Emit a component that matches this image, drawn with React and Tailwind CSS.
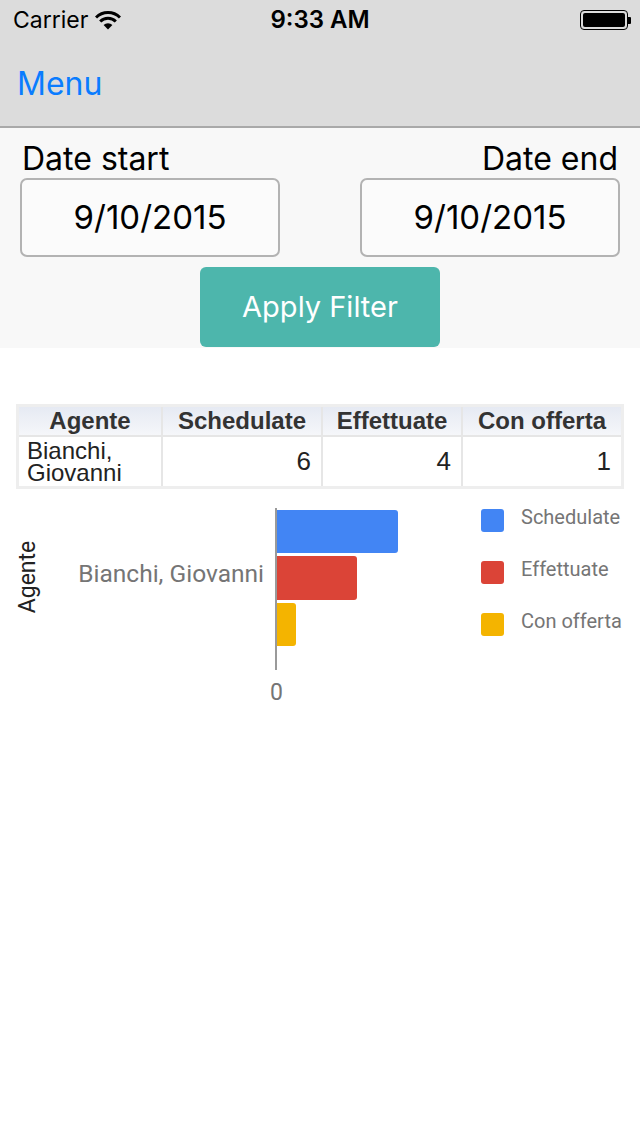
import React from "react";

const sf = { fontFamily: "Inter, 'Noto Sans', sans-serif" };
const arial = { fontFamily: "'Liberation Sans', Arial, sans-serif" };
const roboto = { fontFamily: "Roboto, 'Noto Sans', sans-serif" };

function Wifi() {
  return (
    <svg width="26" height="20" viewBox="0 0 26 20">
      <path d="M1 7.5 A17 17 0 0 1 25 7.5" fill="none" stroke="#000" strokeWidth="3" />
      <path d="M5.2 11.5 A11 11 0 0 1 20.8 11.5" fill="none" stroke="#000" strokeWidth="3" />
      <path d="M13 19.5 L8.6 15 A6.2 6.2 0 0 1 17.4 15 Z" fill="#000" />
    </svg>
  );
}

function Battery() {
  return (
    <div className="flex items-center">
      <div className="w-[48px] h-[20px] rounded-[4px] border border-black p-[2px] flex">
        <div className="flex-1 bg-black rounded-[2px]" />
      </div>
      <div className="w-[3px] h-[7px] bg-black rounded-r-[1px]" />
    </div>
  );
}

export default function App() {
  return (
    <div className="w-[640px] h-[1136px] bg-white overflow-hidden" style={sf}>
      {/* Status bar + nav */}
      <div className="bg-[#dcdcdc] border-b-2 border-[#a9a9a9]">
        <div className="h-[40px] relative flex items-center px-[13px]">
          <div className="flex items-center gap-[7px]">
            <span className="text-[23px] text-black leading-none">Carrier</span>
            <Wifi />
          </div>
          <div className="absolute left-0 right-0 text-center text-[24px] font-semibold text-black leading-none pointer-events-none">
            9:33 AM
          </div>
          <div className="ml-auto mr-[-4px]">
            <Battery />
          </div>
        </div>
        <div className="h-[86px] flex items-center px-[17px]">
          <span className="text-[32px] text-[#0a7cff] leading-none mt-[2px]">Menu</span>
        </div>
      </div>

      {/* Filter form */}
      <div className="bg-[#f8f8f8] px-[20px] pt-[13px] h-[220px]">
        <div className="flex justify-between px-[2px] text-[32px] text-black leading-[36px]">
          <span>Date start</span>
          <span>Date end</span>
        </div>
        <div className="flex justify-between mt-[1px]">
          <div className="w-[260px] h-[79px] border-2 border-[#b3b3b3] rounded-[7px] bg-white/40 flex items-center justify-center text-[33px] text-black">
            9/10/2015
          </div>
          <div className="w-[260px] h-[79px] border-2 border-[#b3b3b3] rounded-[7px] bg-white/40 flex items-center justify-center text-[33px] text-black">
            9/10/2015
          </div>
        </div>
        <div className="flex justify-center mt-[10px]">
          <div className="w-[240px] h-[80px] bg-[#4db6ac] rounded-[6px] flex items-center justify-center text-[29px] text-white">
            Apply Filter
          </div>
        </div>
      </div>

      {/* Table */}
      <div className="px-[16px] mt-[56px]" style={arial}>
        <div className="border-[3px] border-[#eeeeee] w-[608px]">
          <table className="border-collapse w-full table-fixed">
            <colgroup>
              <col className="w-[143px]" />
              <col className="w-[160px]" />
              <col className="w-[140px]" />
              <col />
            </colgroup>
            <thead>
              <tr className="bg-gradient-to-b from-[#e6eaf3] to-[#f6f7fa] h-[29px]">
                <th className="border-r-2 border-[#e6e6e6] text-[24px] font-bold text-[#333] leading-none text-center">Agente</th>
                <th className="border-r-2 border-[#e6e6e6] text-[24px] font-bold text-[#333] leading-none text-center">Schedulate</th>
                <th className="border-r-2 border-[#e6e6e6] text-[24px] font-bold text-[#333] leading-none text-center">Effettuate</th>
                <th className="text-[24px] font-bold text-[#333] leading-none text-center">Con offerta</th>
              </tr>
            </thead>
            <tbody>
              <tr className="h-[50px] bg-white border-t-2 border-[#e6e6e6]">
                <td className="border-r-2 border-[#e6e6e6] text-[24px] text-[#222] leading-[22px] px-[8px] align-middle">Bianchi,<br />Giovanni</td>
                <td className="border-r-2 border-[#e6e6e6] text-[26px] text-[#222] text-right pr-[10px]">6</td>
                <td className="border-r-2 border-[#e6e6e6] text-[26px] text-[#222] text-right pr-[10px]">4</td>
                <td className="text-[26px] text-[#222] text-right pr-[10px]">1</td>
              </tr>
            </tbody>
          </table>
        </div>
      </div>

      {/* Chart */}
      <div className="relative h-[230px] mt-[12px]" style={roboto}>
        {/* y axis title */}
        <div className="absolute left-[28px] top-[62px] -translate-x-1/2 -rotate-90 text-[23px] leading-[28px] text-[#222] whitespace-nowrap">
          Agente
        </div>
        {/* category label */}
        <div className="absolute right-[376px] top-[57px] text-[24.5px] leading-[32px] text-[#757575] whitespace-nowrap">
          Bianchi, Giovanni
        </div>
        {/* axis */}
        <div className="absolute left-[275px] top-[7px] w-[2px] h-[162px] bg-[#9a9a9a]" />
        {/* bars */}
        <div className="absolute left-[277px] top-[9px] flex flex-col gap-[3px]">
          <div className="w-[121px] h-[43px] bg-[#4285f4] rounded-r-[3px]" />
          <div className="w-[80px] h-[44px] bg-[#db4437] rounded-r-[3px]" />
          <div className="w-[19px] h-[43px] bg-[#f4b400] rounded-r-[3px]" />
        </div>
        <div className="absolute left-[270px] top-[176px] text-[23px] leading-[32px] text-[#757575]">0</div>
        {/* legend */}
        <div className="absolute left-[481px] top-[8px] flex flex-col gap-[29px]">
          {[
            ["#4285f4", "Schedulate"],
            ["#db4437", "Effettuate"],
            ["#f4b400", "Con offerta"],
          ].map(([c, t]) => (
            <div key={t} className="flex items-center gap-[17px] h-[23px]">
              <div className="w-[23px] h-[23px] rounded-[3px]" style={{ backgroundColor: c }} />
              <span className="text-[20px] text-[#757575] leading-none -mt-[8px]">{t}</span>
            </div>
          ))}
        </div>
      </div>
    </div>
  );
}
